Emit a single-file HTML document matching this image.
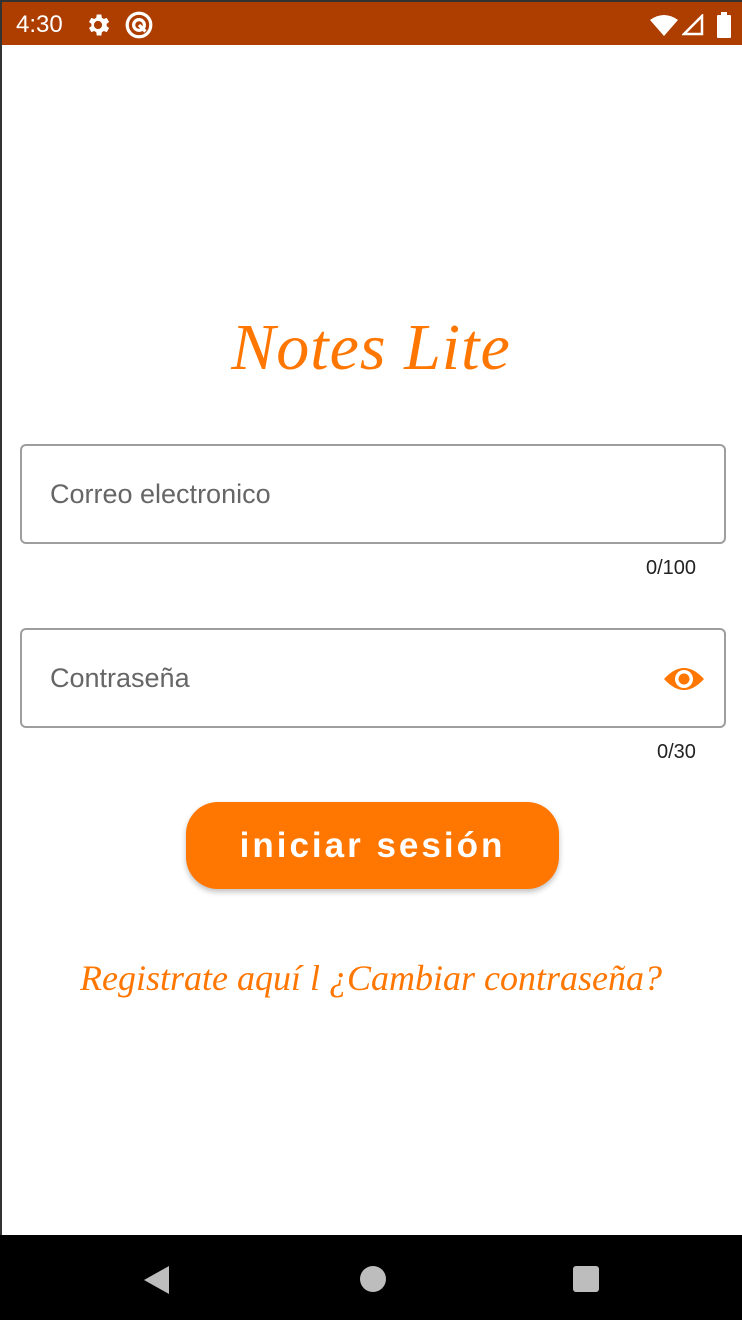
<!DOCTYPE html>
<html><head><meta charset="utf-8"><style>
*{margin:0;padding:0;box-sizing:border-box}
html,body{width:742px;height:1320px;overflow:hidden;background:#fff;font-family:"Liberation Sans",sans-serif}
.frame{position:absolute;left:0;top:0;width:742px;height:1320px;border-left:2px solid #333;border-top:2px solid #333}
.sb{position:absolute;left:2px;top:2px;width:740px;height:43px;background:#ae3d00;color:#fff}
.sb .t{position:absolute;left:14px;top:9px;font-size:24px}
.nav{position:absolute;left:0;top:1235px;width:742px;height:85px;background:#000}
.title{position:absolute;left:0;width:742px;top:310px;text-align:center;font-family:"Liberation Serif",serif;font-style:italic;font-size:66px;color:#ff7600;letter-spacing:1px}
.field{position:absolute;left:20px;width:706px;height:100px;border:2px solid #9e9e9e;border-radius:6px}
.field span{position:absolute;left:28px;top:33px;font-size:27px;color:#666}
.cnt{position:absolute;font-size:20px;color:#222}
.btn{position:absolute;left:186px;top:802px;width:373px;height:87px;border-radius:32px;background:#ff7600;color:#fff;font-size:35px;font-weight:bold;letter-spacing:3px;text-align:center;line-height:87px;box-shadow:0 3px 6px rgba(0,0,0,.25)}
.links{position:absolute;left:0;width:742px;top:957px;text-align:center;font-family:"Liberation Serif",serif;font-style:italic;font-size:36px;color:#ff7600}
</style></head><body>
<div class="frame"></div>
<div class="sb"><div class="t">4:30</div>
<svg style="position:absolute;left:82px;top:9px" width="28" height="28" viewBox="0 0 24 24"><path fill="#fff" d="M19.4 13a7.5 7.5 0 000-2l2.1-1.6-2-3.5-2.5 1a7 7 0 00-1.7-1L14.9 3h-4l-.4 2.9a7 7 0 00-1.7 1l-2.5-1-2 3.5L6.4 11a7.5 7.5 0 000 2l-2.1 1.6 2 3.5 2.5-1a7 7 0 001.7 1l.4 2.9h4l.4-2.9a7 7 0 001.7-1l2.5 1 2-3.5zM12 15.5a3.5 3.5 0 110-7 3.5 3.5 0 010 7z"/></svg>
<svg style="position:absolute;left:122px;top:8px" width="30" height="30" viewBox="0 0 28 28"><circle cx="14" cy="14" r="11" fill="none" stroke="#fff" stroke-width="3"/><circle cx="14" cy="14" r="5" fill="none" stroke="#fff" stroke-width="3"/><path d="M14 14l6 6" stroke="#fff" stroke-width="3"/></svg>
<svg style="position:absolute;left:648px;top:12px" width="28" height="22" viewBox="0 0 28 22"><path fill="#fff" d="M0 6Q14-4 28 6L14 22z"/></svg>
<svg style="position:absolute;left:680px;top:12px" width="22" height="22" viewBox="0 0 22 22"><path fill="none" stroke="#fff" stroke-width="2.5" d="M20 2V20H2z"/></svg>
<svg style="position:absolute;left:714px;top:10px" width="16" height="26" viewBox="0 0 16 26"><rect x="1" y="3" width="14" height="23" rx="1" fill="#fff"/><rect x="5" y="0" width="6" height="4" fill="#fff"/></svg>
</div>
<div class="title">Notes Lite</div>
<div class="field" style="top:444px"><span>Correo electronico</span></div>
<div class="cnt" style="left:646px;top:557px">0/100</div>
<div class="field" style="top:628px"><span>Contraseña</span>
<svg style="position:absolute;left:641px;top:35px" width="42" height="28" viewBox="0 0 42 28"><path fill="#ff7600" d="M1 14Q21-8 41 14Q21 36 1 14z"/><circle cx="21" cy="14" r="9" fill="#fff"/><circle cx="21" cy="14" r="5.5" fill="#ff7600"/></svg></div>
<div class="cnt" style="left:657px;top:741px">0/30</div>
<div class="btn">iniciar sesión</div>
<div class="links">Registrate aquí l ¿Cambiar contraseña?</div>
<div class="nav">
<svg style="position:absolute;left:143px;top:30px" width="28" height="30" viewBox="0 0 28 30"><path fill="#bdbdbd" d="M26 1V29L1 15z"/></svg>
<div style="position:absolute;left:360px;top:31px;width:26px;height:26px;border-radius:50%;background:#bdbdbd"></div>
<div style="position:absolute;left:573px;top:31px;width:26px;height:26px;border-radius:3px;background:#bdbdbd"></div>
</div>
</body></html>
